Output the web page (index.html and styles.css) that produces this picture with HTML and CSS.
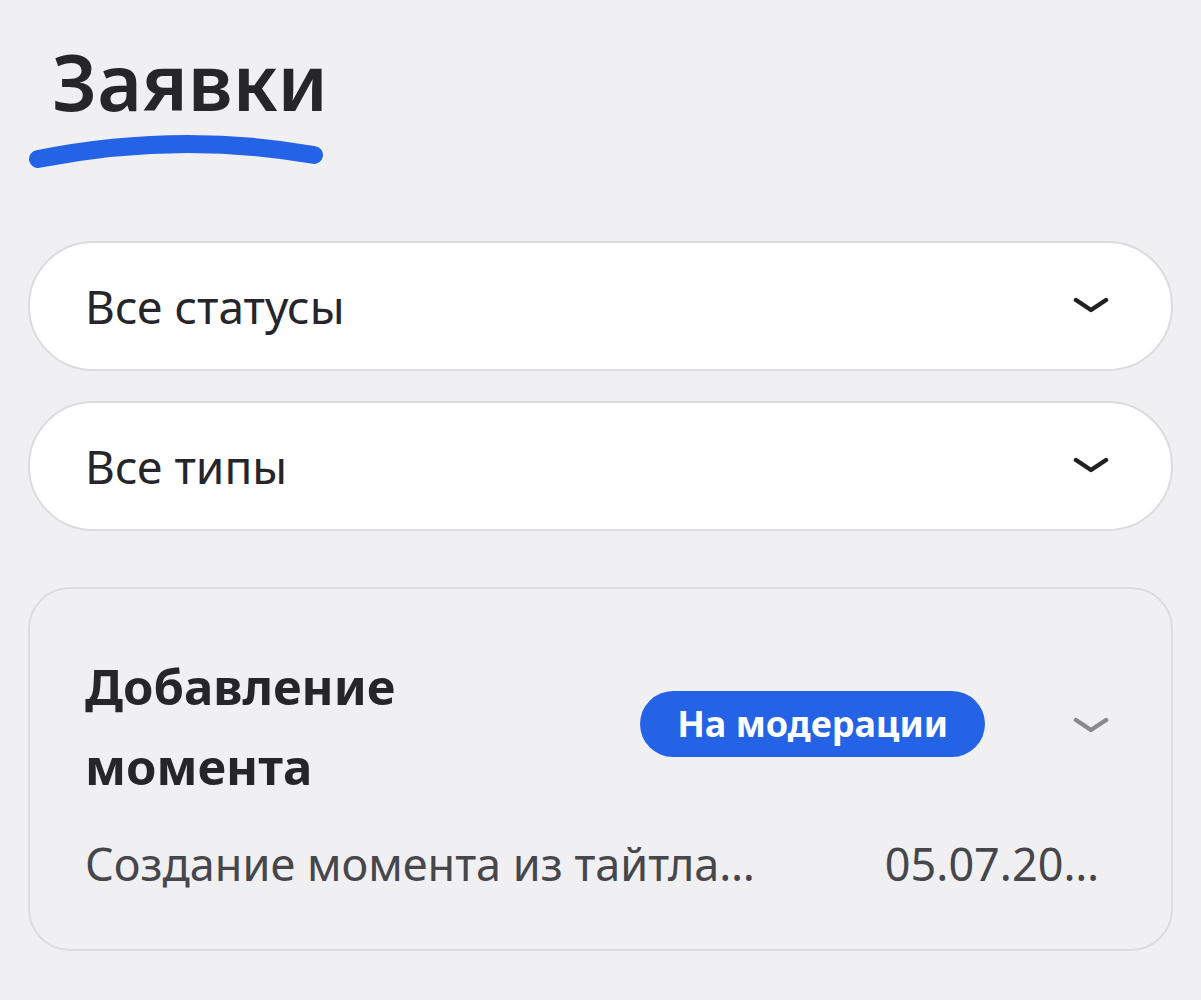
FILE: index.html
```html
<!DOCTYPE html>
<html lang="ru">
<head>
  <meta charset="UTF-8" />
  <meta name="viewport" content="width=device-width, initial-scale=1.0"/>
  <title>Заявки</title>
  <link rel="stylesheet" href="styles.css">
</head>
<body>
  <header class="page-head">
    <h1>Заявки</h1>
    <svg class="underline" width="300" height="40" viewBox="0 0 300 40">
      <path d="M10 29 Q150 1 286 25" fill="none" stroke="#2563e6" stroke-width="18" stroke-linecap="round"/>
    </svg>
  </header>

  <div class="filters">
    <div class="select">
      <span>Все статусы</span>
      <svg class="chevron" width="36" height="20" viewBox="0 0 36 20">
        <path d="M3 4 L18 14 L33 4" fill="none" stroke="#222" stroke-width="4.5" stroke-linecap="round" stroke-linejoin="round"/>
      </svg>
    </div>
    <div class="select">
      <span>Все типы</span>
      <svg class="chevron" width="36" height="20" viewBox="0 0 36 20">
        <path d="M3 4 L18 14 L33 4" fill="none" stroke="#222" stroke-width="4.5" stroke-linecap="round" stroke-linejoin="round"/>
      </svg>
    </div>
  </div>

  <div class="request">
    <div class="request-top">
      <h2>Добавление<br>момента</h2>
      <span class="badge">На модерации</span>
      <svg class="chevron" width="36" height="20" viewBox="0 0 36 20">
        <path d="M3 4 L18 14 L33 4" fill="none" stroke="#8a8a8e" stroke-width="4.5" stroke-linecap="round" stroke-linejoin="round"/>
      </svg>
    </div>
    <div class="request-bottom">
      <span class="desc">Создание момента из тайтла…</span>
      <span class="date">05.07.20…</span>
    </div>
  </div>
</body>
</html>
```

FILE: styles.css
```css
* {
  margin: 0;
  padding: 0;
  box-sizing: border-box;
}

body {
  background: #f0f0f3;
  font-family: "Noto Sans", "Open Sans", sans-serif;
  color: #25252a;
  padding: 34px 28px 0 28px;
}

.page-head h1 {
  font-size: 77px;
  font-weight: 600;
  line-height: 96px;
  margin-left: 24px;
}

.underline {
  display: block;
}

.filters {
  display: flex;
  flex-direction: column;
  gap: 30px;
  margin-top: 71px;
}

.select {
  height: 130px;
  background: #fff;
  border: 2px solid #dcdcdf;
  border-radius: 65px;
  display: flex;
  align-items: center;
  justify-content: space-between;
  padding: 0 62px 0 55px;
  font-size: 46px;
}

.request {
  margin-top: 56px;
  border: 2px solid #dcdcdf;
  border-radius: 42px;
  padding: 57px 62px 55px 55px;
}

.request-top {
  display: flex;
  align-items: center;
}

.request-top h2 {
  font-size: 49px;
  font-weight: 700;
  line-height: 80px;
  flex: 1;
}

.badge {
  background: #2563e6;
  color: #fff;
  font-size: 36px;
  font-weight: 700;
  height: 66px;
  line-height: 66px;
  padding: 0 37px;
  border-radius: 33px;
  margin-right: 88px;
  margin-top: -4px;
}

.request-bottom {
  display: flex;
  justify-content: space-between;
  margin-top: 27px;
  font-size: 45px;
  color: #46464b;
}

.date {
  margin-right: 10px;
}
```
